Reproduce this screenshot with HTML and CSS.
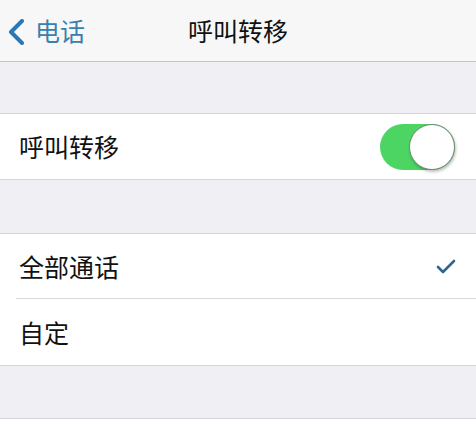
FILE: index.html
```html
<!DOCTYPE html>
<html lang="zh">
<head>
<meta charset="utf-8">
<link rel="stylesheet" href="styles.css">
</head>
<body>
<div class="nav">
  <div class="back">
    <svg class="chev" width="20" height="26" viewBox="0 0 20 26"><path d="M15 2 L4 13 L15 24" fill="none" stroke="#2b78b6" stroke-width="4" stroke-linecap="round" stroke-linejoin="round"/></svg>
    <span class="back-text">电话</span>
  </div>
  <div class="title">呼叫转移</div>
  <div></div>
</div>
<div class="gap gap-a"></div>
<div class="group">
  <div class="row">
    <span class="label">呼叫转移</span>
    <div class="toggle"><div class="knob"></div></div>
  </div>
</div>
<div class="gap gap-b"></div>
<div class="group">
  <div class="row sep">
    <span class="label">全部通话</span>
    <svg class="check" width="20" height="15" viewBox="0 0 20 15"><path d="M2 8 L7 13 L18 2" fill="none" stroke="#2d6791" stroke-width="2.6" stroke-linecap="round" stroke-linejoin="round"/></svg>
  </div>
  <div class="row row-tall">
    <span class="label">自定</span>
  </div>
</div>
<div class="gap gap-c"></div>
<div class="tail"></div>
</body>
</html>
```
FILE: styles.css
```css
html, body {
  margin: 0;
  padding: 0;
}
body {
  background: #efeff4;
  font-family: "Noto Sans CJK SC", "Noto Sans", sans-serif;
  color: #111;
  width: 476px;
  height: 422px;
  overflow: hidden;
}
.nav {
  height: 61px;
  background: #f7f7f8;
  border-bottom: 1px solid #c4c4c8;
  display: grid;
  grid-template-columns: 1fr auto 1fr;
  align-items: center;
}
.back {
  display: flex;
  align-items: center;
  padding-left: 7px;
  gap: 8px;
}
.chev {
  display: block;
  margin-top: 2px;
}
.back-text {
  font-size: 25px;
  color: #3a80ad;
  line-height: 1;
}
.title {
  font-size: 25px;
  font-weight: 400;
  color: #111;
  line-height: 1;
}
.gap-a { height: 51px; }
.gap-b { height: 53px; }
.gap-c { height: 52px; }
.group {
  background: #fff;
  border-top: 1px solid #d4d4d8;
  border-bottom: 1px solid #d4d4d8;
}
.row {
  height: 65px;
  display: flex;
  align-items: center;
  justify-content: space-between;
  padding: 0 21px 0 19px;
  position: relative;
}
.row-tall {
  height: 66px;
}
.row.sep::after {
  content: "";
  position: absolute;
  left: 16px;
  right: 0;
  bottom: 0;
  height: 1px;
  background: #d8d8dc;
}
.label {
  font-size: 25px;
  line-height: 1;
  color: #111;
}
.toggle {
  width: 75px;
  height: 46px;
  border-radius: 23px;
  background: #4cd563;
  position: relative;
}
.knob {
  position: absolute;
  right: 0;
  top: 0;
  width: 44px;
  height: 44px;
  border-radius: 50%;
  background: #fff;
  border: 1px solid #6d8a74;
  box-shadow: 1px 2px 3px rgba(0,0,0,0.25);
}
.check {
  display: block;
  margin-right: -1px;
}
.tail {
  height: 4px;
  background: #fff;
  border-top: 1px solid #d4d4d8;
}
```
